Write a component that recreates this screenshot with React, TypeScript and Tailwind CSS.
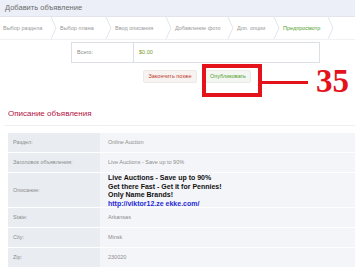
import React from "react";

const steps = [
  { name: "Выбор раздела", w: "w-[57px]" },
  { name: "Выбор плана", w: "w-[55px]" },
  { name: "Ввод описания", w: "w-[60px]" },
  { name: "Добавление фото", w: "w-[62px]" },
  { name: "Доп. опции", w: "w-[46px]" },
  { name: "Предпросмотр", w: "w-[54px]" },
];

const Chevron = () => (
  <svg width="7" height="22" viewBox="0 0 7 22" className="shrink-0">
    <path d="M1 0 L6 11 L1 22" fill="none" stroke="#e3e5ea" strokeWidth="1" />
  </svg>
);

const rows = [
  { label: "Раздел:", value: "Online Auction" },
  { label: "Заголовок объявления:", value: "Live Auctions - Save up to 90%" },
];

const rowsBottom = [
  { label: "State:", value: "Arkansas" },
  { label: "City:", value: "Minsk" },
  { label: "Zip:", value: "230020" },
];

const App = () => {
  return (
    <div className="w-[355px] h-[274px] overflow-hidden bg-white font-['Liberation_Sans',Arial,sans-serif] relative">
      {/* header */}
      <div className="h-[17px] bg-[#eceef8] border-b border-[#e2e5f0] flex items-center pl-[5px]">
        <span className="text-[7.5px] text-[#6b6b6b]">Добавить объявление</span>
      </div>

      {/* steps */}
      <div className="h-[23px] flex items-center pl-[3px] border-b border-[#f0f1f4]">
        {steps.map((s, i) => (
          <div key={s.name} className={"flex items-center justify-between pr-[3px] " + s.w}>
            <span
              className={
                "text-[5.5px] whitespace-nowrap " +
                (i === steps.length - 1 ? "text-[#4f9d2d]" : "text-[#999]")
              }
            >
              {s.name}
            </span>
            <Chevron />
          </div>
        ))}
      </div>

      {/* total */}
      <div className="mt-[2px] ml-[71px] w-[249px] h-[21px] border border-[#dcdfe4] flex text-[5.5px]">
        <div className="w-[62px] border-r border-[#dcdfe4] flex items-center pl-[5px] text-[#8a8a8a]">
          Всего:
        </div>
        <div className="flex items-center pl-[5px] text-[#7a9a2a]">$0.00</div>
      </div>

      {/* buttons */}
      <div className="mt-[7px] ml-[143px] flex gap-[8px] h-[13px]">
        <div className="w-[54px] h-[13px] bg-[#f7f3f1] border border-[#eee8e6] rounded-[2px] flex items-center justify-center text-[5.5px] text-[#c0392b] whitespace-nowrap">
          Закончить позже
        </div>
        <div className="w-[46px] h-[13px] bg-[#f4f7f1] border border-[#e8ece4] rounded-[2px] flex items-center justify-center text-[5.5px] text-[#4f9d2d] whitespace-nowrap">
          Опубликовать
        </div>
      </div>

      {/* annotation */}
      <div className="absolute left-[202px] top-[64px] w-[60px] h-[33px] border-[4px] border-[#e3121b]" />
      <div className="absolute left-[262px] top-[81px] w-[46px] h-[3px] bg-[#e3121b]" />
      <div className="absolute left-[316px] top-[62px] text-[33px] leading-[38px] font-bold text-[#e3121b] font-['Liberation_Serif','Times_New_Roman',serif]">
        35
      </div>

      {/* section title */}
      <div className="mt-[26px] ml-[8px] text-[8px] leading-[10px] text-[#b3123f]">
        Описание объявления
      </div>
      <div className="mt-[6px] ml-[4px] h-px bg-[#eef0f3]" />

      {/* details table */}
      <div className="mt-[7px] ml-[8px] flex flex-col text-[5.5px]">
        {rows.map((r) => (
          <div key={r.label} className="flex h-[20px] border-b border-white">
            <div className="w-[92px] bg-[#e9edf1] flex items-center pl-[5px] text-[#8c8c8c]">
              {r.label}
            </div>
            <div className="flex-1 bg-[#f4f5f8] flex items-center pl-[8px] text-[#8c8c8c]">
              {r.value}
            </div>
          </div>
        ))}
        <div className="flex h-[35px] border-b border-white">
          <div className="w-[92px] bg-[#e9edf1] flex items-center pl-[5px] text-[#8c8c8c]">
            Описание:
          </div>
          <div className="flex-1 bg-[#f4f5f8] pl-[8px] pt-[1px] text-[7px] leading-[8.5px] font-bold text-[#111]">
            <div>Live Auctions - Save up to 90%</div>
            <div>Get there Fast - Get it for Pennies!</div>
            <div>Only Name Brands!</div>
            <div className="text-[#1f2bd6]">http://viktor12.ze ekke.com/</div>
          </div>
        </div>
        {rowsBottom.map((r) => (
          <div key={r.label} className="flex h-[20px] border-b border-white">
            <div className="w-[92px] bg-[#e9edf1] flex items-center pl-[5px] text-[#8c8c8c]">
              {r.label}
            </div>
            <div className="flex-1 bg-[#f4f5f8] flex items-center pl-[8px] text-[#8c8c8c]">
              {r.value}
            </div>
          </div>
        ))}
      </div>
    </div>
  );
};

export default App;
